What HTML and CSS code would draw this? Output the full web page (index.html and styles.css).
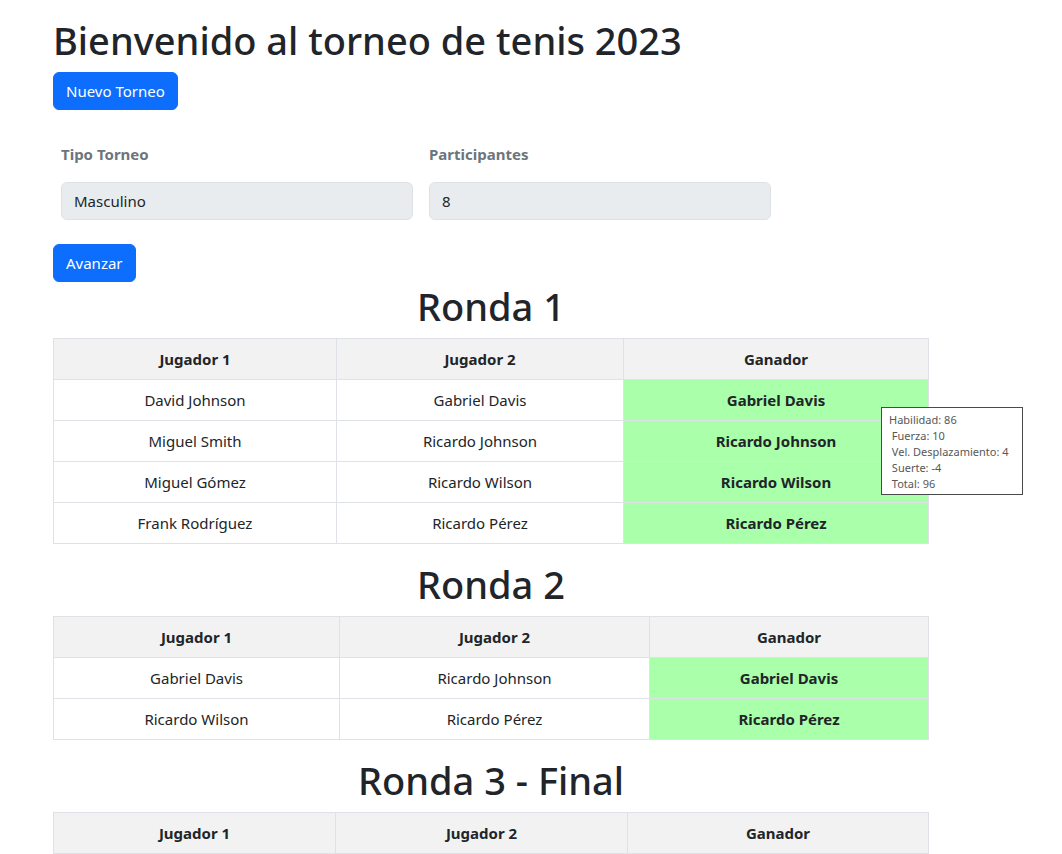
FILE: index.html
```html
<!DOCTYPE html>
<html lang="es">
<head>
<meta charset="utf-8">
<title>Torneo de tenis 2023</title>
<link rel="stylesheet" href="styles.css">
</head>
<body>
<div class="page">
  <h1 class="title">Bienvenido al torneo de tenis 2023</h1>
  <button class="btn">Nuevo Torneo</button>

  <div class="form-row">
    <div class="field field-a">
      <label class="label">Tipo Torneo</label>
      <div class="input">Masculino</div>
    </div>
    <div class="field field-b">
      <label class="label">Participantes</label>
      <div class="input">8</div>
    </div>
  </div>

  <button class="btn">Avanzar</button>

  <section class="round">
    <h1 class="round-title">Ronda 1</h1>
    <table class="bracket">
      <colgroup><col class="r1c1"><col class="r1c2"><col class="r1c3"></colgroup>
      <thead><tr><th>Jugador 1</th><th>Jugador 2</th><th>Ganador</th></tr></thead>
      <tbody>
        <tr><td>David Johnson</td><td>Gabriel Davis</td><td class="win">Gabriel Davis</td></tr>
        <tr><td>Miguel Smith</td><td>Ricardo Johnson</td><td class="win">Ricardo Johnson</td></tr>
        <tr><td>Miguel Gómez</td><td>Ricardo Wilson</td><td class="win">Ricardo Wilson</td></tr>
        <tr><td>Frank Rodríguez</td><td>Ricardo Pérez</td><td class="win">Ricardo Pérez</td></tr>
      </tbody>
    </table>
  </section>

  <section class="round">
    <h1 class="round-title">Ronda 2</h1>
    <table class="bracket">
      <colgroup><col class="r2c1"><col class="r2c2"><col class="r2c3"></colgroup>
      <thead><tr><th>Jugador 1</th><th>Jugador 2</th><th>Ganador</th></tr></thead>
      <tbody>
        <tr><td>Gabriel Davis</td><td>Ricardo Johnson</td><td class="win">Gabriel Davis</td></tr>
        <tr><td>Ricardo Wilson</td><td>Ricardo Pérez</td><td class="win">Ricardo Pérez</td></tr>
      </tbody>
    </table>
  </section>

  <section class="round">
    <h1 class="round-title">Ronda 3 - Final</h1>
    <table class="bracket">
      <colgroup><col class="r3c1"><col class="r3c2"><col class="r3c3"></colgroup>
      <thead><tr><th>Jugador 1</th><th>Jugador 2</th><th>Ganador</th></tr></thead>
    </table>
  </section>

  <div class="tooltip">Habilidad: 86<br>&nbsp;Fuerza: 10<br>&nbsp;Vel. Desplazamiento: 4<br>&nbsp;Suerte: -4<br>&nbsp;Total: 96</div>
</div>
</body>
</html>
```
FILE: styles.css
```css
* { box-sizing: border-box; }
html, body { margin: 0; padding: 0; background: #fff; }
body {
  font-family: "Noto Sans", "Open Sans", sans-serif;
  font-size: 15px;
  line-height: 24px;
  color: #212529;
}
.page {
  position: relative;
  padding: 16px 0 0 53px;
  width: 929px;
}
.title {
  margin: 0 0 8px;
  font-size: 38px;
  font-weight: 500;
  line-height: 48px;
}
.btn {
  display: block;
  font-family: inherit;
  font-size: 15px;
  line-height: 24px;
  padding: 6px 12px;
  color: #fff;
  background: #0d6efd;
  border: 1px solid #0d6efd;
  border-radius: 6px;
}
.form-row {
  display: grid;
  grid-template-columns: 352px 342px;
  column-gap: 16px;
  padding: 32px 8px 0;
  margin-bottom: 24px;
}
.label {
  display: block;
  font-weight: 700;
  color: #6c757d;
  margin-bottom: 16px;
}
.input {
  height: 38px;
  padding: 6px 12px;
  background: #e9ecef;
  border: 1px solid #dee2e6;
  border-radius: 6px;
  color: #212529;
}
.round-title {
  margin: 0 0 8px;
  font-size: 38px;
  font-weight: 500;
  line-height: 48px;
  text-align: center;
}
.bracket {
  width: 876px;
  border-collapse: collapse;
  table-layout: fixed;
  margin-bottom: 16px;
}
.bracket th, .bracket td {
  border: 1px solid #dee2e6;
  height: 41px;
  padding: 8px;
  text-align: center;
  vertical-align: middle;
}
.bracket th { background: #f2f2f2; font-weight: 700; }
.bracket td.win { background: #aaffaa; font-weight: 700; }
.r1c1 { width: 283px; } .r1c2 { width: 287px; } .r1c3 { width: 305px; }
.r2c1 { width: 286px; } .r2c2 { width: 310px; } .r2c3 { width: 279px; }
.r3c1 { width: 282px; } .r3c2 { width: 292px; } .r3c3 { width: 301px; }
.tooltip {
  position: absolute;
  left: 881px;
  top: 407px;
  width: 142px;
  height: 88px;
  padding: 4px 7px;
  background: #fff;
  border: 1px solid #4a4a4a;
  font-size: 11px;
  line-height: 16px;
  color: #575757;
  white-space: nowrap;
}
```
